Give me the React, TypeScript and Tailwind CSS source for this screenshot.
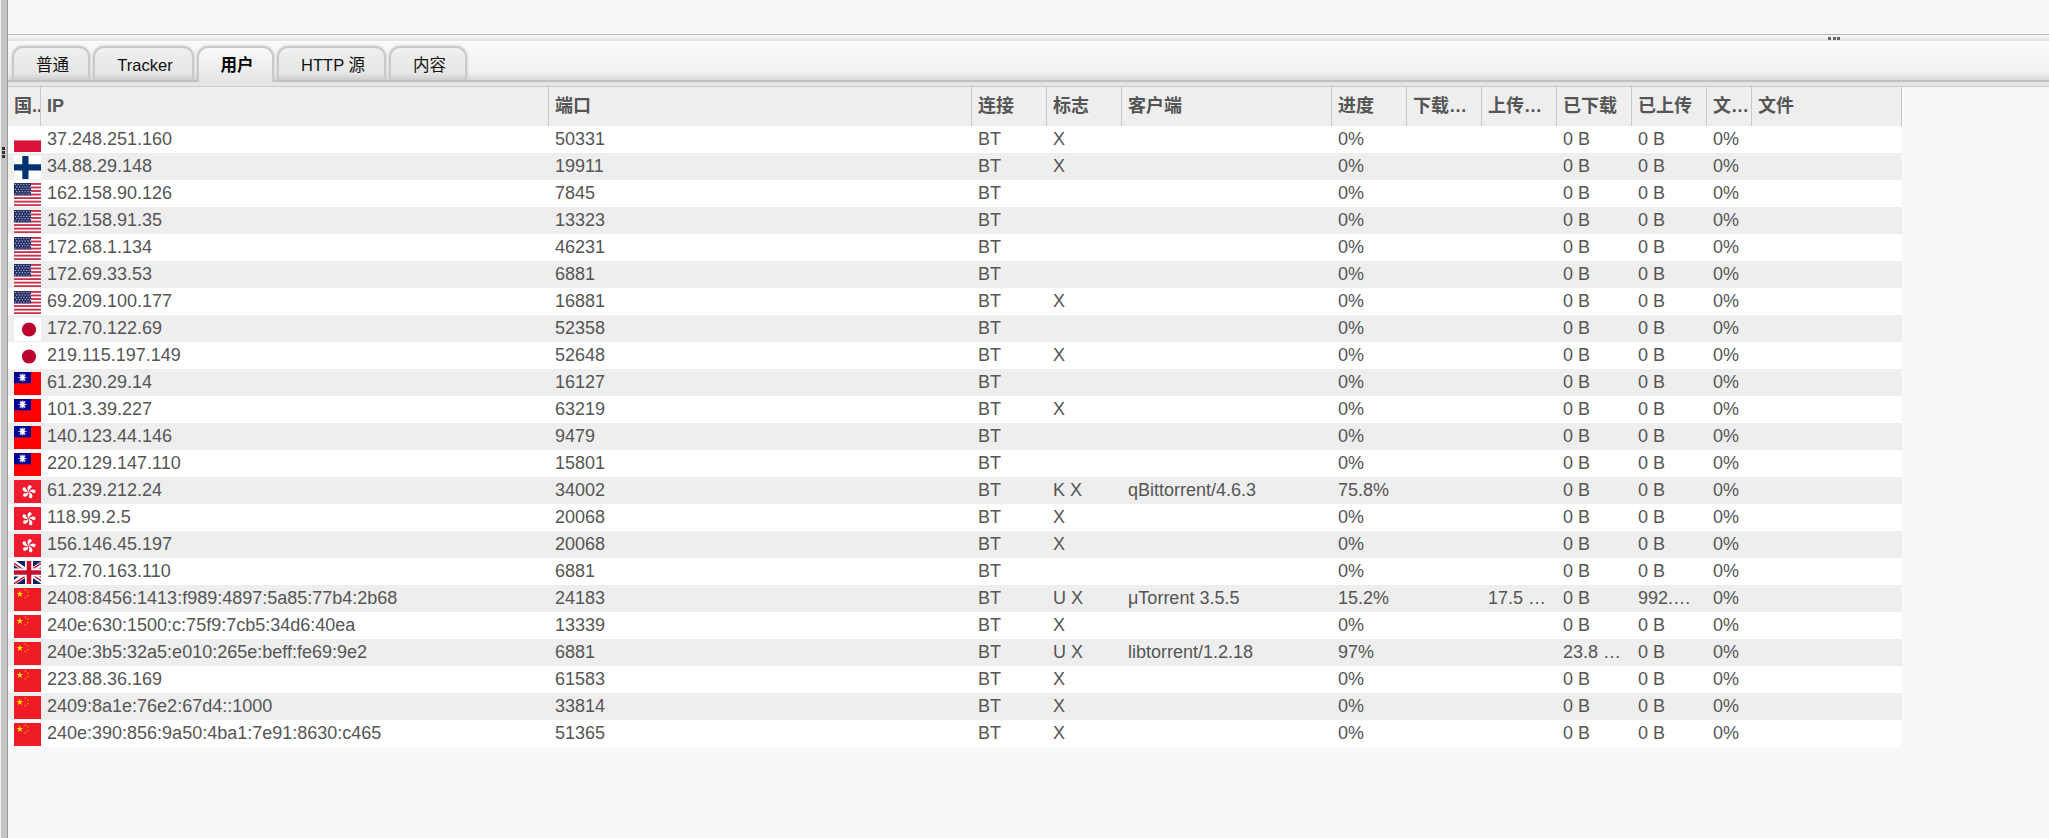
import React from "react";

type Country = "pl" | "fi" | "us" | "jp" | "tw" | "hk" | "gb" | "cn";

const columns = "grid grid-cols-[33px_508px_423px_75px_75px_210px_75px_75px_75px_75px_75px_45px_150px]";

const headers = ["国..", "IP", "端口", "连接", "标志", "客户端", "进度", "下载…", "上传…", "已下载", "已上传", "文…", "文件"];

type Peer = [Country, string, string, string, string?, string?, string?, string?, string?];

// country, ip, port, flags, client, progress, upload speed, downloaded, uploaded
const peers: Peer[] = [
  ["pl", "37.248.251.160", "50331", "X"],
  ["fi", "34.88.29.148", "19911", "X"],
  ["us", "162.158.90.126", "7845", ""],
  ["us", "162.158.91.35", "13323", ""],
  ["us", "172.68.1.134", "46231", ""],
  ["us", "172.69.33.53", "6881", ""],
  ["us", "69.209.100.177", "16881", "X"],
  ["jp", "172.70.122.69", "52358", ""],
  ["jp", "219.115.197.149", "52648", "X"],
  ["tw", "61.230.29.14", "16127", ""],
  ["tw", "101.3.39.227", "63219", "X"],
  ["tw", "140.123.44.146", "9479", ""],
  ["tw", "220.129.147.110", "15801", ""],
  ["hk", "61.239.212.24", "34002", "K X", "qBittorrent/4.6.3", "75.8%"],
  ["hk", "118.99.2.5", "20068", "X"],
  ["hk", "156.146.45.197", "20068", "X"],
  ["gb", "172.70.163.110", "6881", ""],
  ["cn", "2408:8456:1413:f989:4897:5a85:77b4:2b68", "24183", "U X", "μTorrent 3.5.5", "15.2%", "17.5 …", "0 B", "992.…"],
  ["cn", "240e:630:1500:c:75f9:7cb5:34d6:40ea", "13339", "X"],
  ["cn", "240e:3b5:32a5:e010:265e:beff:fe69:9e2", "6881", "U X", "libtorrent/1.2.18", "97%", "", "23.8 …", "0 B"],
  ["cn", "223.88.36.169", "61583", "X"],
  ["cn", "2409:8a1e:76e2:67d4::1000", "33814", "X"],
  ["cn", "240e:390:856:9a50:4ba1:7e91:8630:c465", "51365", "X"],
];

function FlagArt({ country }: { country: Country }) {
  switch (country) {
    case "pl":
      return (
        <>
          <path fill="#fff" d="M0 0h27v23H0z" />
          <path fill="#dc143c" d="M0 11.4h27V23H0z" />
        </>
      );
    case "fi":
      return (
        <>
          <path fill="#fff" d="M0 0h27v23H0z" />
          <path fill="#003170" d="M8.3 0h6.2v23H8.3zM0 8.3h27v6.2H0z" />
        </>
      );
    case "us":
      return (
        <>
          <path fill="#fff" d="M0 0h27v23H0z" />
          {[0, 1, 2, 3, 4, 5, 6].map((i) => (
            <rect key={i} y={i * 3.54} width="27" height="1.85" fill="#c8324a" />
          ))}
          <path fill="#252f66" d="M0 0h17v12.4H0z" />
          {[1.5, 3.9, 6.3, 8.7, 11].map((y, r) =>
            [1.5, 4.3, 7.1, 9.9, 12.7, 15.2].map((x) => (
              <circle key={x + "-" + y} cx={x + (r % 2 ? 1.2 : 0)} cy={y} r="0.62" fill="#c9d0e2" />
            )),
          )}
        </>
      );
    case "jp":
      return (
        <>
          <path fill="#fff" d="M0 0h27v23H0z" />
          <circle cx="15" cy="11.5" r="7.1" fill="#bc002d" />
        </>
      );
    case "tw":
      return (
        <>
          <path fill="#fe0000" d="M0 0h27v23H0z" />
          <path fill="#000095" d="M0 0h17v11.3H0z" />
          <path stroke="#fff" strokeWidth="1.1" d="M8.5 1.4v8.2M4.4 5.5h8.2M5.6 2.6l5.8 5.8M11.4 2.6L5.6 8.4M6.7 1.9l3.6 7.2M10.3 1.9L6.7 9.1" opacity=".75" />
          <circle cx="8.5" cy="5.5" r="2.4" fill="#fff" />
        </>
      );
    case "hk":
      return (
        <>
          <path fill="#ee1c2e" d="M0 0h27v23H0z" />
          {[0, 72, 144, 216, 288].map((a) => (
            <path
              key={a}
              fill="#fff"
              transform={`rotate(${a + 12} 14.7 11.8)`}
              d="M14.7 11.4C12.6 10 11.9 6.6 14.2 4.9C16.2 4.8 17 6.2 16.4 7.6C15.3 8.4 14.7 9.6 14.7 11.4z"
            />
          ))}
        </>
      );
    case "gb":
      return (
        <>
          <path fill="#012169" d="M0 0h27v23H0z" />
          <path stroke="#fff" strokeWidth="4.6" d="M-2 0l34 23M32 0L-2 23" />
          <path stroke="#c8102e" strokeWidth="1.5" d="M-2 1l17 11.5M32 23L15 11.5M31 -.4L15 10.7M-1 23.4L15 12.5" />
          <path fill="#fff" d="M11 0h8v23h-8zM0 7.6h27v7.8H0z" />
          <path fill="#c8102e" d="M12.7 0h4.6v23h-4.6zM0 9.2h27v4.6H0z" />
        </>
      );
    case "cn":
      return (
        <>
          <path fill="#ee1c25" d="M0 0h27v23H0z" />
          <path fill="#ffde00" d="M5.8 2.6l.8 2.4h2.5L7.1 6.5l.8 2.4-2.1-1.5-2 1.5.7-2.4-2-1.5H5z" />
          <path fill="#f9b814" d="M10.5 1.4l1.9.3-.8 1.5zM13 3.8l1.6-.3-.3 1.8zM12.9 7l1.7.2-1 1.5zM10.3 9.2l1.7.1-.9 1.4z" />
        </>
      );
  }
}

function Flag({ country }: { country: Country }) {
  return (
    <svg className="mt-[3px] ml-1.5 block h-[23px] w-[27px]" viewBox="0 0 27 23">
      <FlagArt country={country} />
    </svg>
  );
}

function Cell({ children }: { children?: React.ReactNode }) {
  return <div className="overflow-hidden pl-1.5 whitespace-nowrap">{children}</div>;
}

function PeerRow({ peer }: { peer: Peer }) {
  const [country, ip, port, flags, client = "", progress = "0%", upSpeed = "", down = "0 B", up = "0 B"] = peer;
  return (
    <div className={`${columns} h-[27px] bg-white text-[18px] leading-[27px] text-[#555] even:bg-[#eee]`}>
      <Flag country={country} />
      <Cell>{ip}</Cell>
      <Cell>{port}</Cell>
      <Cell>BT</Cell>
      <Cell>{flags}</Cell>
      <Cell>{client}</Cell>
      <Cell>{progress}</Cell>
      <Cell />
      <Cell>{upSpeed}</Cell>
      <Cell>{down}</Cell>
      <Cell>{up}</Cell>
      <Cell>0%</Cell>
      <Cell />
    </div>
  );
}

const tabs = [
  { label: "普通", width: "w-[78px]" },
  { label: "Tracker", width: "w-[101px]" },
  { label: "用户", width: "w-[77px]", active: true },
  { label: "HTTP 源", width: "w-[109px]" },
  { label: "内容", width: "w-[78px]" },
];

function TabBar() {
  return (
    <div className="flex h-[41px] items-end gap-[3px] border-b-2 border-[#c0c0c0] bg-linear-to-b from-[#fafafa] via-[#f1f1f1] via-80% to-[#dcdcdc] pl-1">
      {tabs.map((t) => (
        <div
          key={t.label}
          className={`flex items-center justify-center rounded-t-[11px] border-x-2 border-t-2 border-[#c9c9c9] pl-[3px] text-[16.5px] leading-none shadow-[0_0_3px_#c4c4c4] ${t.width} ${
            t.active
              ? "relative -mb-0.5 h-[36px] bg-linear-to-b from-[#fafafa] to-[#e5e5e5] font-bold text-black [clip-path:inset(-4px_-4px_0_-4px)]"
              : "h-[34px] bg-linear-to-b from-[#f0f0f0] via-[#e6e6e6] via-80% to-[#cdcdcd] pt-0.5 text-[#111]"
          }`}
        >
          {t.label}
        </div>
      ))}
    </div>
  );
}

export default function App() {
  return (
    <div className="flex h-[838px] w-[2049px] overflow-hidden bg-[#f8f8f8] font-['Liberation_Sans','Noto_Sans_CJK_SC',sans-serif]">
      <div className="flex w-2 shrink-0 flex-col items-end border-r border-l border-r-[#999] border-l-[#f0f0f0] bg-[#c4c4c4] pt-[147px]">
        <div className="mr-[2px] flex flex-col gap-px">
          <i className="h-[3px] w-[3px] bg-[#333]" />
          <i className="h-[3px] w-[3px] bg-[#333]" />
          <i className="h-[3px] w-[3px] bg-[#333]" />
        </div>
      </div>
      <div className="flex min-w-0 flex-1 flex-col">
        <div className="h-[34px] shrink-0" />
        <div className="flex h-[7px] shrink-0 border-t border-[#b8b8b8] bg-linear-to-b from-[#f8f8f8] to-[#e2e2e2] pt-[2px] pl-[1820px]">
          <div className="flex gap-[1.5px]">
            <i className="h-[3px] w-[3px] bg-[#666]" />
            <i className="h-[3px] w-[3px] bg-[#666]" />
            <i className="h-[3px] w-[3px] bg-[#666]" />
          </div>
        </div>
        <TabBar />
        <div className="h-[5px] shrink-0 border-b border-[#ccc] bg-[#e5e5e5]" />
        <div className="w-[1894px]">
          <div className={`${columns} h-[39px] bg-[#eee] text-[18px] leading-[39px] font-bold text-[#555]`}>
            {headers.map((h) => (
              <div key={h} className="overflow-hidden border-r border-[#c8c8c8] pl-1.5 whitespace-nowrap">
                {h}
              </div>
            ))}
          </div>
          <div>
            {peers.map((p) => (
              <PeerRow key={p[1]} peer={p} />
            ))}
          </div>
        </div>
      </div>
    </div>
  );
}
